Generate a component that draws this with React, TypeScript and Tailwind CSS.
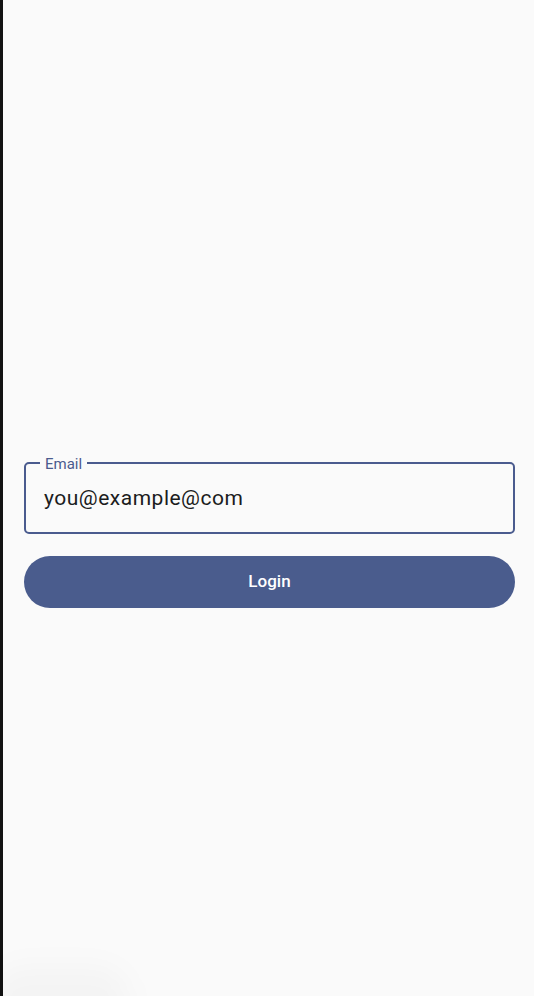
import React from "react";

export default function App() {
  return (
    <div
      className="relative flex h-[996px] w-full overflow-hidden bg-[#fafafa]"
      style={{ fontFamily: "Roboto, 'Noto Sans', sans-serif" }}
    >
      <div className="w-[3px] shrink-0 bg-[#121212]" />
      <div className="flex flex-1 flex-col pl-[21px] pr-[19px] pt-[462px]">
        <div className="relative flex h-[72px] items-center rounded-[5px] border-2 border-[#4a5b8e] pl-[18px]">
          <span className="absolute left-[14px] top-0 -translate-y-1/2 bg-[#fafafa] px-[5px] text-[15px] leading-[18px] text-[#4a5b8e]">
            Email
          </span>
          <span className="text-[21px] leading-[28px] tracking-[0.5px] text-[#1b1c20]">
            you@example@com
          </span>
        </div>
        <button className="mt-[22px] flex h-[52px] items-center justify-center rounded-full bg-[#4a5c8d] text-[17px] font-medium text-white">
          Login
        </button>
      </div>
      <div className="pointer-events-none absolute bottom-[-40px] left-[-10px] h-[70px] w-[140px] rounded-full bg-[#000]/[0.025] blur-[14px]" />
    </div>
  );
}
